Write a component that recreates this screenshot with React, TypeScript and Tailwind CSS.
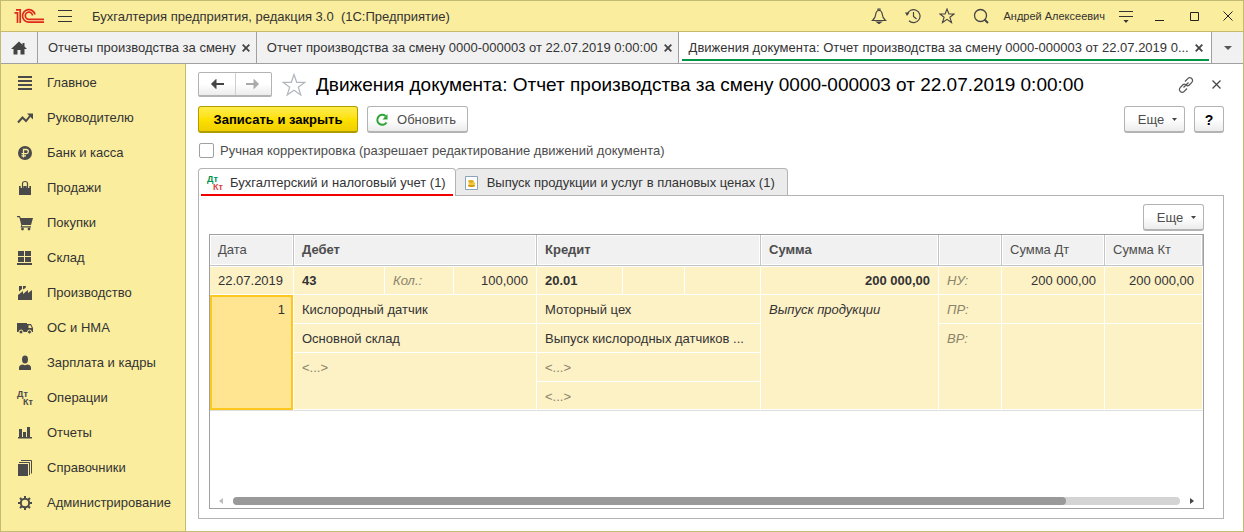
import type { ReactNode, SVGProps } from "react";

function Svg({ size = 16, children, ...rest }: { size?: number; children: ReactNode } & SVGProps<SVGSVGElement>) {
  return (
    <svg width={size} height={size} viewBox={`0 0 ${size} ${size}`} fill="none" aria-hidden="true" className="shrink-0" {...rest}>
      {children}
    </svg>
  );
}

const ink = "#4a4a4a";

const sections: { label: string; icon: ReactNode }[] = [
  { label: "Главное", icon: <path d="M1 1h14v2H1zM1 5h14v2H1zM1 9h14v2H1zM1 13h14v2H1z" fill={ink} /> },
  {
    label: "Руководителю",
    icon: (
      <>
        <path d="M1 12.5l4.500-5 3.500 3.500 4-5" stroke={ink} strokeWidth="2" />
        <path d="M10 3.500h6v6z" fill={ink} />
      </>
    ),
  },
  {
    label: "Банк и касса",
    icon: (
      <>
        <circle cx="8" cy="8" r="7" fill={ink} />
        <path d="M6.500 12.500V4.500h2.700a2 2 0 0 1 0 4.200H4.500M4.500 10.800h4.500" stroke="#fbed9e" strokeWidth="1.300" />
      </>
    ),
  },
  {
    label: "Продажи",
    icon: (
      <>
        <path d="M2 6h12v9H2z" fill={ink} />
        <path d="M5 8V3.500C5 .3 11 .3 11 3.500V8" stroke="#fbed9e" strokeWidth="2.600" />
        <path d="M5.500 8V3.500C5.500 .8 10.500 .8 10.500 3.500V8" stroke={ink} strokeWidth="1.200" />
      </>
    ),
  },
  {
    label: "Покупки",
    icon: (
      <>
        <path d="M0 1h3l.6 2H16l-2 7H5.200l-.4 1.200H14v1.300H3.500l.8-2.600L2.300 2.300H0z" fill={ink} />
        <circle cx="5.500" cy="14" r="1.400" fill={ink} />
        <circle cx="12" cy="14" r="1.400" fill={ink} />
      </>
    ),
  },
  { label: "Склад", icon: <path d="M1 1h6v5H1zM8 1h6v5H8zM1 7h6v5H1zM8 7h6v5H8zM0 13h15v2H0z" fill={ink} /> },
  { label: "Производство", icon: <path d="M1 15V10l5-4v3l5-4v3l4-3v10zM2 1h3v3l-3 2.500zM6 1h3l-.5 2L6 4.500z" fill={ink} /> },
  {
    label: "ОС и НМА",
    icon: (
      <>
        <path d="M0 3h10v9H0zM10 4h4l2 4v4h-6z" fill={ink} />
        <path d="M11.500 5.200h2l1.300 2.800h-3.300z" fill="#fbed9e" />
        <circle cx="4" cy="12" r="2" fill={ink} stroke="#fbed9e" />
        <circle cx="12.500" cy="12" r="2" fill={ink} stroke="#fbed9e" />
      </>
    ),
  },
  {
    label: "Зарплата и кадры",
    icon: (
      <>
        <ellipse cx="8" cy="4.500" rx="3" ry="4" fill={ink} />
        <path d="M2 15v-2.500c0-2 2-2.800 4-3 1 .9 3 .9 4 0 2 .2 4 1 4 3V15z" fill={ink} />
      </>
    ),
  },
  { label: "Операции", icon: null },
  { label: "Отчеты", icon: <path d="M1 12h14v1.500H1zM2 4h3v8H2zM6 7h3v5H6zM10 2h3v10h-3z" fill={ink} /> },
  {
    label: "Справочники",
    icon: (
      <>
        <path d="M1 4h10v12H1z" fill={ink} />
        <path d="M2 2.500h10.500V15M4 .5h10.500v13" stroke={ink} />
      </>
    ),
  },
  {
    label: "Администрирование",
    icon: (
      <>
        <circle cx="8" cy="8" r="4.200" stroke={ink} strokeWidth="2" />
        <path
          d="M8 1v2.500M8 12.500V15M1 8h2.500M12.500 8H15M3 3l1.800 1.800M11.200 11.200L13 13M13 3l-1.800 1.800M4.800 11.200L3 13"
          stroke={ink}
          strokeWidth="2"
        />
      </>
    ),
  },
];

function DtKt({ colored = false }: { colored?: boolean }) {
  return (
    <span aria-hidden="true" className="flex w-4 shrink-0 flex-col text-left text-[9px] leading-[8px] font-bold">
      <span className={colored ? "text-[#00924f]" : "text-[#4a4a4a]"}>Дт</span>
      <span className={colored ? "pl-1.5 text-[#d9453d]" : "pl-1.5 text-[#4a4a4a]"}>Кт</span>
    </span>
  );
}

function Logo() {
  return (
    <svg width="30" height="16" viewBox="0 0 30 16" fill="none" role="img" aria-label="1С" className="shrink-0">
      <g stroke="#dd2a1b" strokeWidth="1.700">
        <path d="M.5 4.800h3V15M2 1.800h4.200V15" />
        <path d="M21 6.500A6.300 6.300 0 1 0 15 14.200H30" />
        <path d="M18.500 7.500A3.600 3.600 0 1 0 15 11.300H30" />
      </g>
    </svg>
  );
}

function Caret() {
  return (
    <svg width="5" height="3" viewBox="0 0 5 3" aria-hidden="true">
      <path d="M0 0h5L2.500 3z" fill="#444" />
    </svg>
  );
}

function CloseSmall() {
  return (
    <svg width="8" height="8" viewBox="0 0 8 8" aria-hidden="true">
      <path d="M.7.7l6.600 6.600M7.300.7L.7 7.300" stroke="#444" strokeWidth="1.800" />
    </svg>
  );
}

const raised =
  "flex items-center justify-center rounded-[3px] border border-b-2 border-[#b3b3b3] bg-linear-to-b from-white from-50% to-[#ececec] pt-px text-[#4d4d4d]";

function MoreButton() {
  return (
    <button type="button" className={`${raised} h-[27px] w-[61px] gap-2 pl-1.5`}>
      Еще <Caret />
    </button>
  );
}

function WindowTab({ title, active = false }: { title: string; active?: boolean }) {
  return (
    <div
      className={
        active
          ? "relative flex min-w-0 flex-1 items-center bg-white pr-2 pl-2.5"
          : "flex min-w-0 items-center border-r border-[#a0a0a0] pr-1.5 pl-2.5"
      }
    >
      <button type="button" className="min-w-0 flex-1 text-left whitespace-nowrap">
        {title}
      </button>
      <button type="button" aria-label="Закрыть вкладку" className="ml-1.5 shrink-0">
        <CloseSmall />
      </button>
      {active && <span className="absolute right-0.5 bottom-0.5 left-[3px] h-0.5 bg-[#009646]" />}
    </div>
  );
}

function TitleBar() {
  return (
    <header className="flex h-[31px] items-center border-b border-[#c9b96c] bg-[#fbed9e] pr-2.5 pl-[13px]">
      <Logo />
      <button type="button" aria-label="Главное меню" className="ml-3.5">
        <Svg size={14} stroke="#333" strokeWidth="1">
          <path d="M0 1.500h14M0 7.500h14M0 12.500h14" />
        </Svg>
      </button>
      <h1 className="ml-5 min-w-0 flex-1 truncate pt-px text-[13px] whitespace-pre">
        {"Бухгалтерия предприятия, редакция 3.0  (1С:Предприятие)"}
      </h1>
      <div className="flex items-center gap-[18px]">
        <button type="button" aria-label="Уведомления">
          <Svg stroke="#444" strokeWidth="1.200">
            <path d="M1.500 12.500c2-1.800 3-3 3.200-6C5 3.700 6 2.500 8 2.500s3 1.200 3.300 4c.2 3 1.200 4.200 3.200 6z" />
            <path d="M7 2.500V1h2v1.500" />
            <path d="M6 14h4l-2 1.500z" fill="#444" />
          </Svg>
        </button>
        <button type="button" aria-label="История">
          <Svg stroke="#444" strokeWidth="1.200">
            <path d="M2.200 6.500A6.500 6.500 0 1 1 4 12.800M8.500 4v4.500l3 2.500" />
            <path d="M0 4.500h4.500L2 8z" fill="#444" stroke="none" />
          </Svg>
        </button>
        <button type="button" aria-label="Избранное">
          <Svg stroke="#444" strokeWidth="1.100">
            <path d="M8 1l1.900 5H15l-4.100 3.200L12.500 14.500 8 11.300 3.500 14.500l1.600-5.300L1 6h5.100z" />
          </Svg>
        </button>
        <button type="button" aria-label="Поиск">
          <Svg stroke="#444" strokeWidth="1.300">
            <circle cx="7.500" cy="7.500" r="6" />
            <path d="M11.500 11.500l3.500 3.500" strokeWidth="2" />
          </Svg>
        </button>
      </div>
      <button type="button" className="ml-3.5 text-[11px]">
        Андрей Алексеевич
      </button>
      <button type="button" aria-label="Сервис" className="ml-3.5">
        <Svg size={14} stroke="#333">
          <path d="M0 2.500h14M0 7.500h14" />
          <path d="M4.500 11h5L7 14z" fill="#333" stroke="none" />
        </Svg>
      </button>
      <div className="ml-[22px] flex items-center gap-6">
        <button type="button" aria-label="Свернуть">
          <Svg size={10} stroke="#222">
            <path d="M0 9.500h9" />
          </Svg>
        </button>
        <button type="button" aria-label="Развернуть">
          <Svg size={10} stroke="#222">
            <path d="M1.500 1.500h8v8h-8z" />
          </Svg>
        </button>
        <button type="button" aria-label="Закрыть">
          <Svg size={10} stroke="#222">
            <path d="M.5.500l9 9M9.500.500l-9 9" />
          </Svg>
        </button>
      </div>
    </header>
  );
}

const line = "border-r border-b border-white bg-[#fdf1c6] px-2 pt-[7px] pb-[5px] align-top font-normal";
const firstLine = "border-t border-r border-b border-white bg-[#fdf1c6] px-2 pt-1.5 pb-[5px] align-top";
const lastLine =
  "border-r border-b border-r-white border-b-[#dedede] bg-[#fdf1c6] px-2 pt-[7px] pb-[5px] align-top shadow-[inset_0_-1px_0_#fff]";
const head =
  "h-[31px] border-r border-b border-[#c4c4c4] bg-[#f1f1f1] px-2 text-left font-normal text-[#4d4d4d] shadow-[inset_0_0_0_1px_#fff]";
const headBold =
  "h-[31px] border-r border-b border-[#c4c4c4] bg-[#f1f1f1] px-2 text-left font-bold text-[#4d4d4d] shadow-[inset_0_0_0_1px_#fff]";
const muted = "text-[#8a8468]";

function Postings() {
  return (
    <table className="w-full table-fixed border-separate border-spacing-0 leading-4">
      <colgroup>
        <col className="w-[84px]" />
        <col className="w-[91px]" />
        <col className="w-[69px]" />
        <col className="w-[83px]" />
        <col className="w-[86px]" />
        <col className="w-[62px]" />
        <col className="w-[76px]" />
        <col />
        <col className="w-[63px]" />
        <col className="w-[103px]" />
        <col className="w-[98px]" />
      </colgroup>
      <thead>
        <tr>
          <th className={head}>Дата</th>
          <th className={headBold} colSpan={3}>Дебет</th>
          <th className={headBold} colSpan={3}>Кредит</th>
          <th className={headBold}>Сумма</th>
          <th className={head}></th>
          <th className={head}>Сумма Дт</th>
          <th className={head}>Сумма Кт</th>
        </tr>
      </thead>
      <tbody>
        <tr>
          <td className={firstLine}>22.07.2019</td>
          <td className={`${firstLine} font-bold`}>43</td>
          <td className={`${firstLine} ${muted} italic`}>Кол.:</td>
          <td className={`${firstLine} text-right`}>100,000</td>
          <td className={`${firstLine} font-bold`}>20.01</td>
          <td className={firstLine}></td>
          <td className={firstLine}></td>
          <td className={`${firstLine} text-right font-bold`}>200 000,00</td>
          <td className={`${firstLine} ${muted} italic`}>НУ:</td>
          <td className={`${firstLine} text-right`}>200 000,00</td>
          <td className={`${firstLine} text-right`}>200 000,00</td>
        </tr>
        <tr>
          <td
            rowSpan={4}
            className="border-r border-b border-r-white border-b-[#dedede] bg-[#ffe591] px-2 pt-[7px] pb-[5px] text-right align-top shadow-[inset_0_0_0_2px_#fcc81e]"
          >
            1
          </td>
          <td className={line} colSpan={3}>Кислородный датчик</td>
          <td className={line} colSpan={3}>Моторный цех</td>
          <td className={`${lastLine} italic`} rowSpan={4}>Выпуск продукции</td>
          <td className={`${line} ${muted} italic`}>ПР:</td>
          <td className={line}></td>
          <td className={line}></td>
        </tr>
        <tr>
          <td className={line} colSpan={3}>Основной склад</td>
          <td className={`${line} truncate`} colSpan={3}>Выпуск кислородных датчиков ...</td>
          <td className={`${lastLine} ${muted} italic`} rowSpan={3}>ВР:</td>
          <td className={lastLine} rowSpan={3}></td>
          <td className={lastLine} rowSpan={3}></td>
        </tr>
        <tr>
          <td className={`${lastLine} ${muted}`} colSpan={3} rowSpan={2}>&lt;...&gt;</td>
          <td className={`${line} ${muted}`} colSpan={3}>&lt;...&gt;</td>
        </tr>
        <tr>
          <td className={`${lastLine} h-[29px] ${muted}`} colSpan={3}>&lt;...&gt;</td>
        </tr>
      </tbody>
    </table>
  );
}

function DocumentForm() {
  return (
    <main className="flex min-w-0 flex-1 flex-col pt-2 pr-[19px] pb-3 pl-3">
      <div className="flex h-[25px] items-center">
        <div className="flex h-[25px] w-[74px] shrink-0 rounded-xs border border-b-2 border-[#b3b3b3] bg-linear-to-b from-white from-50% to-[#ececec]">
          <button type="button" aria-label="Назад" className="flex flex-1 items-center justify-center border-r border-[#cfcfcf]">
            <Svg size={14}>
              <path d="M2 7h12" stroke="#444" strokeWidth="2" />
              <path d="M6 2.500L1.500 7 6 11.500z" fill="#444" stroke="#444" />
            </Svg>
          </button>
          <button type="button" aria-label="Вперед" className="flex flex-1 items-center justify-center">
            <Svg size={14}>
              <path d="M0 7h12" stroke="#aaa" strokeWidth="2" />
              <path d="M8 2.500L12.500 7 8 11.500z" fill="#aaa" stroke="#aaa" />
            </Svg>
          </button>
        </div>
        <button type="button" aria-label="В избранное" className="ml-2.5">
          <Svg size={24} stroke="#b0b6bd" strokeWidth="1.200">
            <path d="M12 1.500l2.700 7.800h8.300l-6.700 4.900 2.500 7.800-6.800-4.800-6.800 4.800 2.500-7.800L1 9.300h8.300z" />
          </Svg>
        </button>
        <h2 className="ml-2.5 min-w-0 flex-1 truncate text-[19px] leading-6 text-black">
          Движения документа: Отчет производства за смену 0000-000003 от 22.07.2019 0:00:00
        </h2>
        <button type="button" aria-label="Ссылка">
          <Svg stroke="#555" strokeWidth="1.200">
            <path d="M7 4.500l2.500-2.700a2.700 2.700 0 0 1 4.500 0c.8 1.200.6 2.600-.2 3.500L11.300 8c-.8.900-2.400 1-3.300.3M9 11.500l-2.500 2.700a2.700 2.700 0 0 1-4.500 0c-.8-1.200-.6-2.600.2-3.500L4.700 8c.8-.900 2.400-1 3.300-.3M5.500 10.500l5-5" />
          </Svg>
        </button>
        <button type="button" aria-label="Закрыть форму" className="mr-[3px] ml-[18px]">
          <Svg size={9} stroke="#444" strokeWidth="1.200">
            <path d="M.5.500l8 8M8.500.500l-8 8" />
          </Svg>
        </button>
      </div>

      <div className="mt-[9px] flex items-center gap-[9px]">
        <button
          type="button"
          className="h-[27px] w-40 rounded-[3px] border border-b-2 border-[#b09c00] bg-linear-to-b from-[#ffec47] via-[#ffe100] to-[#efcf00] pt-px font-bold text-black"
        >
          Записать и закрыть
        </button>
        <button type="button" className={`${raised} h-[27px] w-[101px] gap-2 pr-1`}>
          <Svg size={14}>
            <path d="M11.500 9.500a5 5 0 1 1-1-6.500" stroke="#2fa336" strokeWidth="2" />
            <path d="M12.500 1v5.500H7.500z" fill="#2fa336" />
          </Svg>
          Обновить
        </button>
        <span className="flex-1" />
        <MoreButton />
        <button type="button" aria-label="Справка" className={`${raised} h-[27px] w-[30px] text-sm font-bold text-black`}>
          ?
        </button>
      </div>

      <label className="mt-[7px] flex h-5 items-center gap-1.5 pl-px text-[#4d4d4d]">
        <input type="checkbox" className="h-[15px] w-[15px] appearance-none rounded-xs border border-[#a0a0a0] bg-white" />
        <span className="pt-px">Ручная корректировка (разрешает редактирование движений документа)</span>
      </label>

      <div role="tablist" className="relative z-10 -mb-px mt-2 flex h-7">
        <button
          type="button"
          role="tab"
          aria-selected="true"
          className="relative flex items-center gap-[7px] rounded-t-sm border border-b-0 border-[#b3b3b3] bg-white pr-[9px] pl-2"
        >
          <DtKt colored />
          Бухгалтерский и налоговый учет (1)
          <span className="absolute right-0.5 bottom-0 left-0.5 h-0.5 bg-[#f00000]" />
        </button>
        <button
          type="button"
          role="tab"
          aria-selected="false"
          className="flex items-center gap-2 rounded-t-sm border border-l-0 border-[#b3b3b3] bg-[#ebebeb] pt-px pr-3 pl-[9px]"
        >
          <Svg size={14}>
            <path d="M.5.500h12v13H.5z" fill="#fff" stroke="#8ba3b8" />
            <ellipse cx="6.500" cy="9.500" rx="3.500" ry="1.600" fill="#d59b12" />
            <ellipse cx="7" cy="7.500" rx="3.500" ry="1.600" fill="#f3c93b" />
            <ellipse cx="6" cy="5.500" rx="3" ry="1.400" fill="#e3ab1e" />
          </Svg>
          Выпуск продукции и услуг в плановых ценах (1)
        </button>
      </div>

      <section className="flex flex-1 flex-col border border-[#b3b3b3] pt-2 pr-[19px] pb-[9px] pl-2.5">
        <div className="flex justify-end">
          <MoreButton />
        </div>
        <div className="mt-[3px] flex flex-1 flex-col overflow-hidden border border-[#a0a0a0] bg-white">
          <Postings />
          <div className="mt-auto flex items-center pr-[9px] pb-[3px] pl-[9px]">
            <svg width="4" height="6" viewBox="0 0 4 6" aria-hidden="true">
              <path d="M4 0v6L0 3z" fill="#bbb" />
            </svg>
            <div className="mx-2.5 h-2 flex-1 rounded-full bg-[#d4d4d4]">
              <div className="h-2 w-[88%] rounded-full bg-[#999]" />
            </div>
            <svg width="4" height="6" viewBox="0 0 4 6" aria-hidden="true">
              <path d="M0 0v6l4-3z" fill="#444" />
            </svg>
          </div>
        </div>
      </section>
    </main>
  );
}

export default function App() {
  return (
    <div className="flex min-h-screen flex-col border border-[#c4bb73] bg-white font-['Liberation_Sans',Arial,sans-serif] text-[13px] leading-4 text-[#333]">
      <TitleBar />
      <nav aria-label="Открытые окна" className="flex h-8 border-b border-[#a0a0a0] bg-[#f1f1f1]">
        <button type="button" aria-label="Начальная страница" className="flex w-[37px] shrink-0 items-center justify-center border-r border-[#a0a0a0]">
          <Svg>
            <path d="M8 1.500L0 9h2.500v5.500h4V10h3v4.500h4V9H16l-2.500-2.400V3h-2v1.700z" fill="#444" />
          </Svg>
        </button>
        <WindowTab title="Отчеты производства за смену" />
        <WindowTab title="Отчет производства за смену 0000-000003 от 22.07.2019 0:00:00" />
        <WindowTab title="Движения документа: Отчет производства за смену 0000-000003 от 22.07.2019 0..." active />
        <button type="button" aria-label="Список окон" className="flex w-8 shrink-0 items-center justify-center border-l border-[#a0a0a0]">
          <svg width="8" height="4" viewBox="0 0 8 4" aria-hidden="true">
            <path d="M0 0h8L4 4z" fill="#555" />
          </svg>
        </button>
      </nav>
      <div className="flex flex-1">
        <nav aria-label="Разделы" className="w-[185px] shrink-0 border-r border-[#c9b96c] bg-[#fbed9e]">
          <ul>
            {sections.map((s) => (
              <li key={s.label}>
                <a href="#" className="flex h-[35px] items-center gap-3.5 pt-0.5 pl-4">
                  {s.icon ? <Svg>{s.icon}</Svg> : <DtKt />}
                  {s.label}
                </a>
              </li>
            ))}
          </ul>
        </nav>
        <DocumentForm />
      </div>
    </div>
  );
}
